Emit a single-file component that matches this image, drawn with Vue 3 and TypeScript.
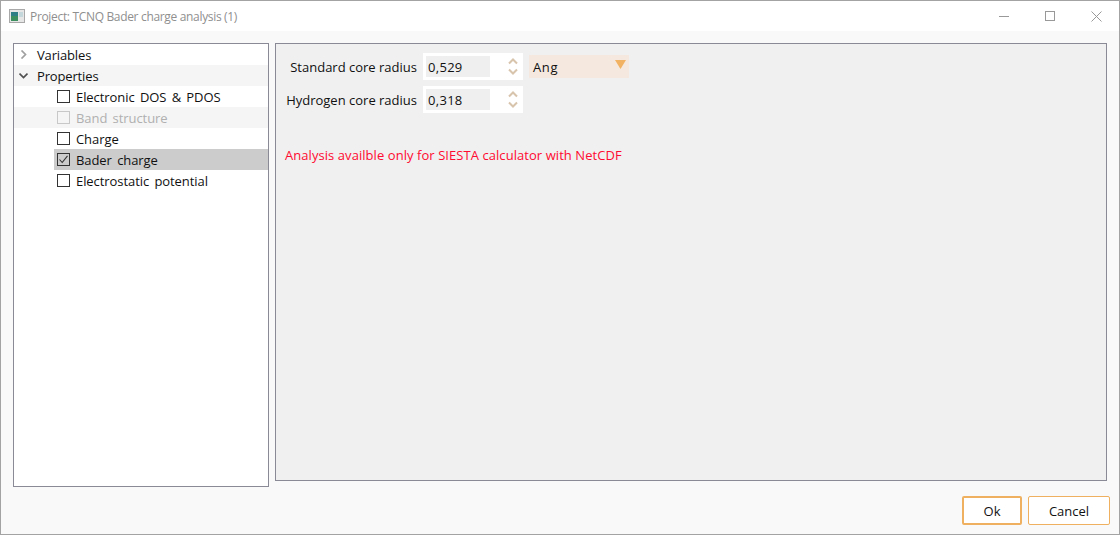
<script setup lang="ts">
interface TreeItem { label: string; checked?: boolean; disabled?: boolean; selected?: boolean; shaded?: boolean }
const items: TreeItem[] = [
  { label: 'Electronic DOS & PDOS' },
  { label: 'Band structure', disabled: true, shaded: true },
  { label: 'Charge' },
  { label: 'Bader charge', checked: true, selected: true },
  { label: 'Electrostatic potential' },
]
const fields = [
  { label: 'Standard core radius', value: '0,529' },
  { label: 'Hydrogen core radius', value: '0,318' },
]
</script>

<template>
  <div class="window">
    <header class="titlebar">
      <svg class="appicon" width="16" height="14" viewBox="0 0 16 14">
        <rect x="0.5" y="0.5" width="15" height="13" fill="#e6e6e6" stroke="#a8a8a8" />
        <rect x="2" y="3" width="7" height="9" fill="#2f7f86" />
        <rect x="2" y="7" width="7" height="5" fill="#3d8f5f" />
        <rect x="10" y="3" width="4" height="5" fill="#c4d8dc" />
      </svg>
      <span class="title">Project: TCNQ Bader charge analysis (1)</span>
      <div class="winbtns">
        <svg width="10" height="10" viewBox="0 0 10 10"><path d="M0 5.5H10" stroke="#999" /></svg>
        <svg width="10" height="10" viewBox="0 0 10 10"><rect x="0.5" y="0.5" width="9" height="9" fill="none" stroke="#999" /></svg>
        <svg width="11" height="11" viewBox="0 0 11 11"><path d="M0.5 0.5L10.5 10.5M10.5 0.5L0.5 10.5" stroke="#999" /></svg>
      </div>
    </header>
    <main class="body">
      <div class="panels">
        <nav class="tree">
          <div class="row top">
            <svg class="chev" width="9" height="9" viewBox="0 0 9 9"><path d="M2.5 0.5L6.5 4.5L2.5 8.5" fill="none" stroke="#a0a0a0" stroke-width="1.7" /></svg>
            <span>Variables</span>
          </div>
          <div class="row top shaded">
            <svg class="chev" width="9" height="9" viewBox="0 0 9 9"><path d="M0.5 2.5L4.5 6.5L8.5 2.5" fill="none" stroke="#505050" stroke-width="1.7" /></svg>
            <span>Properties</span>
          </div>
          <div v-for="it in items" :key="it.label" class="row child" :class="{ shaded: it.shaded, disabled: it.disabled }">
            <div class="childinner" :class="{ selected: it.selected }">
              <span class="check">
                <svg v-if="it.checked" width="11" height="11" viewBox="0 0 11 11"><path d="M1.5 5.5L4.2 8.5L9.5 1.8" fill="none" stroke="#333" stroke-width="1.1" /></svg>
              </span>
              <span>{{ it.label }}</span>
            </div>
          </div>
        </nav>
        <section class="content">
          <div class="form">
            <template v-for="(f, i) in fields" :key="f.label">
              <label class="flabel">{{ f.label }}</label>
              <div class="spin">
                <span class="spinval">{{ f.value }}</span>
                <span class="arrows">
                  <svg width="10" height="7" viewBox="0 0 10 7"><path d="M1 5.5L5 1.5L9 5.5" fill="none" stroke="#d8c4ac" stroke-width="2" /></svg>
                  <svg width="10" height="7" viewBox="0 0 10 7"><path d="M1 1.5L5 5.5L9 1.5" fill="none" stroke="#d8c4ac" stroke-width="2" /></svg>
                </span>
              </div>
              <div v-if="i === 0" class="combo">
                <span class="comboval">Ang</span>
                <svg width="11" height="9" viewBox="0 0 11 9"><path d="M0 0H11L5.5 9Z" fill="#f2b263" /></svg>
              </div>
              <div v-else></div>
            </template>
          </div>
          <p class="warn">Analysis availble only for SIESTA calculator with NetCDF</p>
        </section>
      </div>
      <footer class="actions">
        <button class="btn default">Ok</button>
        <button class="btn cancel">Cancel</button>
      </footer>
    </main>
  </div>
</template>

<style>
html, body { margin: 0; padding: 0; background: #f9f9f9; }
</style>

<style scoped>
.window {
  width: 1120px;
  height: 535px;
  box-sizing: border-box;
  border: 1px solid #a3a3a3;
  background: #f9f9f9;
  display: flex;
  flex-direction: column;
  font-family: "Open Sans", "Noto Sans", sans-serif;
  font-size: 13px;
  color: #111;
  overflow: hidden;
}
.titlebar {
  height: 30px;
  flex: none;
  background: #fff;
  display: flex;
  align-items: center;
  padding-left: 8px;
}
.appicon { margin-right: 5px; }
.title { color: #8f8f8f; font-size: 12px; letter-spacing: -0.33px; }
.winbtns {
  margin-left: auto;
  display: flex;
  align-items: center;
  gap: 36px;
  padding-right: 17px;
}
.body {
  flex: 1;
  display: flex;
  flex-direction: column;
  padding: 12px 9px 9px 12px;
  min-height: 0;
}
.panels {
  display: flex;
  gap: 6px;
  align-items: flex-start;
  padding-right: 3px;
}
.tree {
  width: 256px;
  height: 444px;
  box-sizing: border-box;
  flex: none;
  background: #fff;
  border: 1px solid #8a8a96;
}
.row {
  height: 21px;
  display: flex;
  align-items: center;
  white-space: nowrap;
  letter-spacing: -0.07px;
  word-spacing: 2px;
}
.row.top { padding-left: 5px; letter-spacing: -0.15px; }
.row.shaded { background: #f5f5f5; }
.chev { margin-right: 9px; flex: none; }
.row.child { padding-left: 40px; }
.row.disabled { color: #b0b0b0; }
.childinner {
  flex: 1;
  height: 21px;
  display: flex;
  align-items: center;
  padding-left: 3px;
}
.childinner.selected { background: #cccccc; }
.check {
  width: 13px;
  height: 13px;
  box-sizing: border-box;
  border: 1px solid #333;
  margin-right: 6px;
  display: flex;
  align-items: center;
  justify-content: center;
  flex: none;
}
.row.disabled .check { border-color: #c8c8c8; }
.content {
  flex: 1;
  height: 438px;
  box-sizing: border-box;
  background: #f0f0f0;
  border: 1px solid #8a8a96;
  padding: 9px 9px 0 9px;
}
.form {
  display: grid;
  grid-template-columns: 132px 100px 100px;
  grid-auto-rows: 27px;
  gap: 6px;
  align-items: center;
  width: max-content;
}
.flabel { text-align: right; white-space: nowrap; letter-spacing: 0; }
.spin {
  height: 27px;
  background: #fff;
  display: flex;
  align-items: center;
  padding: 3px;
  box-sizing: border-box;
}
.spinval {
  width: 64px;
  height: 21px;
  box-sizing: border-box;
  line-height: 22px;
  padding-left: 2px;
  background: #efefef;
  letter-spacing: 0.3px;
  flex: none;
}
.arrows {
  display: flex;
  flex-direction: column;
  margin-left: 18px;
  gap: 3px;
}
.arrows svg { display: block; }
.combo {
  height: 23px;
  background: #f5e9df;
  display: flex;
  align-items: center;
  justify-content: space-between;
  padding: 0 3px 0 4px;
  box-sizing: border-box;
}
.comboval { letter-spacing: 0.6px; }
.combo svg { margin-top: -5px; }
.warn {
  margin: 33px 0 0 0;
  color: #ff0a30;
  line-height: 18px;
  letter-spacing: 0.06px;
}
.actions {
  margin-top: auto;
  display: flex;
  justify-content: flex-end;
  gap: 6px;
}
.btn {
  height: 29px;
  background: #fff;
  border-radius: 2px;
  font: inherit;
  color: #111;
  padding: 0;
  box-sizing: border-box;
}
.btn.default { width: 60px; border: 2px solid #efb060; }
.btn.cancel { width: 82px; border: 1px solid #efb060; }
</style>
